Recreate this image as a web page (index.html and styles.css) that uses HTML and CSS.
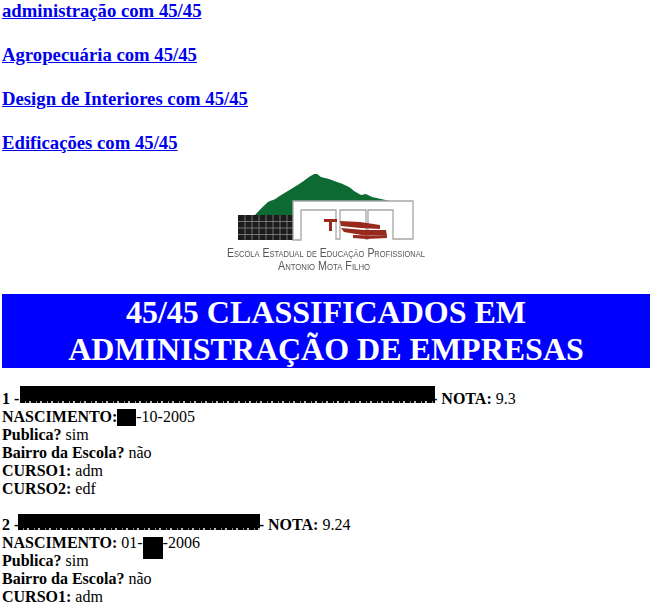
FILE: index.html

```html
<!DOCTYPE html>
<html lang="pt-BR">
<head>
  <meta charset="UTF-8">
  <title>classificados</title>
  <link rel="stylesheet" href="styles.css">
</head>
<body>

  <h3 class="curso"><a href="#adm">administração com 45/45</a></h3>
  <h3 class="curso"><a href="#agro">Agropecuária com 45/45</a></h3>
  <h3 class="curso"><a href="#design">Design de Interiores com 45/45</a></h3>
  <h3 class="curso"><a href="#edf">Edificações com 45/45</a></h3>

  <div class="logo">
    <svg width="340" height="106" viewBox="156 168 340 106">
      <defs>
        <filter id="soft"><feGaussianBlur stdDeviation="0.45"/></filter>
      </defs>
      <g filter="url(#soft)">
        <!-- morro -->
        <path fill="#0b6b33" d="M255 215 C259 211 263 206 268 202 C272 200 275 200 278 197 L296 186 C301 183 305 180 309 177 L314 174 L317 174 L321 177 L329 179 L337 182 C343 184 349 186 354 191 L361 195 L366 194 L372 197 L390 201 L293 201 L293 215 Z"/>
        <!-- grade -->
        <rect x="238" y="215" width="55" height="25" fill="#1c1c1c"/>
        <path stroke="#8a8a8a" stroke-width="0.8" fill="none" d="M245 215V240M252 215V240M259 215V240M266 215V240M273 215V240M280 215V240M287 215V240M238 221.500H293M238 228H293M238 234.500H293"/>
        <!-- predio -->
        <path stroke="#a6a6a6" stroke-width="1.3" fill="none" d="M293 240V201H413V239H393V210H368V239H366V210H340V239H336V210H301V240Z"/>
        <!-- TEE -->
        <g fill="#97291f">
          <path d="M324 219H337V222H332V231H329V222H324Z"/>
          <path d="M340 221 L360 222 L380 225 L380 229 L360 228 L341 226 Z"/>
          <path d="M341 228 L364 230 L386 230 L387 236 L362 235 L344 232 Z"/>
          <path d="M353 235 L387 236 L387 238 L366 239 L353 238 Z"/>
        </g>
        <text class="logo-txt" x="326" y="257" textLength="198" lengthAdjust="spacingAndGlyphs">Escola Estadual de Educação Profissional</text>
        <text class="logo-txt" x="324" y="270" textLength="92" lengthAdjust="spacingAndGlyphs">Antonio Mota Filho</text>
      </g>
    </svg>
  </div>

  <h1 class="banner">45/45 CLASSIFICADOS EM ADMINISTRAÇÃO DE EMPRESAS</h1>

  <p class="aluno">
    <b>1 -<span class="tarja tarja-nome1"></span>- NOTA:</b> 9.3<br>
    <b>NASCIMENTO:</b><span class="tarja tarja-dia"></span>-10-2005<br>
    <b>Publica?</b> sim<br>
    <b>Bairro da Escola?</b> não<br>
    <b>CURSO1:</b> adm<br>
    <b>CURSO2:</b> edf
  </p>

  <p class="aluno">
    <b>2 -<span class="tarja tarja-nome2"></span>- NOTA:</b> 9.24<br>
    <b>NASCIMENTO:</b> 01-<span class="tarja tarja-mes"></span>-2006<br>
    <b>Publica?</b> sim<br>
    <b>Bairro da Escola?</b> não<br>
    <b>CURSO1:</b> adm
  </p>

</body>
</html>
```

FILE: styles.css

```css
html {
  height: 604px;
  overflow: hidden;
}

body {
  margin: 0 8px 0 2px;
  background: #fff;
  color: #000;
  font-family: "Liberation Serif", serif;
  font-size: 16px;
}

.curso {
  margin: 0 0 23px 0;
  font-size: 18.72px;
  line-height: 21px;
}

.logo {
  margin-top: -8px;
}

.logo svg {
  display: block;
  margin: 0 auto;
}

.logo-txt {
  font-family: "Liberation Sans", sans-serif;
  font-size: 12.5px;
  font-variant: small-caps;
  fill: #555;
  text-anchor: middle;
}

.banner {
  margin: 20px 0 22px 0;
  background: #00f;
  color: #fff;
  font-size: 32px;
  line-height: 37px;
  text-align: center;
}

.aluno {
  margin: 0 0 18px 0;
  line-height: 18px;
}

/* tarjas pretas, o pe das letras escapa embaixo */
.tarja {
  display: inline-block;
  background: #000;
  vertical-align: top;
}

.tarja-nome1,
.tarja-nome2 {
  background:
    linear-gradient(#000, #000) top / 100% calc(100% - 2px) no-repeat,
    repeating-linear-gradient(90deg, #000 0 5px, #888 5px 6px, #000 6px 9px, #bbb 9px 11px);
}

.tarja-nome1 {
  width: 415px;
  height: 17px;
  margin: -4px -3px 0 0.700px;
}

.tarja-nome2 {
  width: 242px;
  height: 16px;
  margin: -2px -1.300px 0 -1.300px;
}

.tarja-dia {
  width: 19px;
  height: 17px;
  margin: 1px 0 0 0;
}

.tarja-mes {
  width: 20px;
  height: 22px;
  margin: 3px 0 -7px 0;
}
```
